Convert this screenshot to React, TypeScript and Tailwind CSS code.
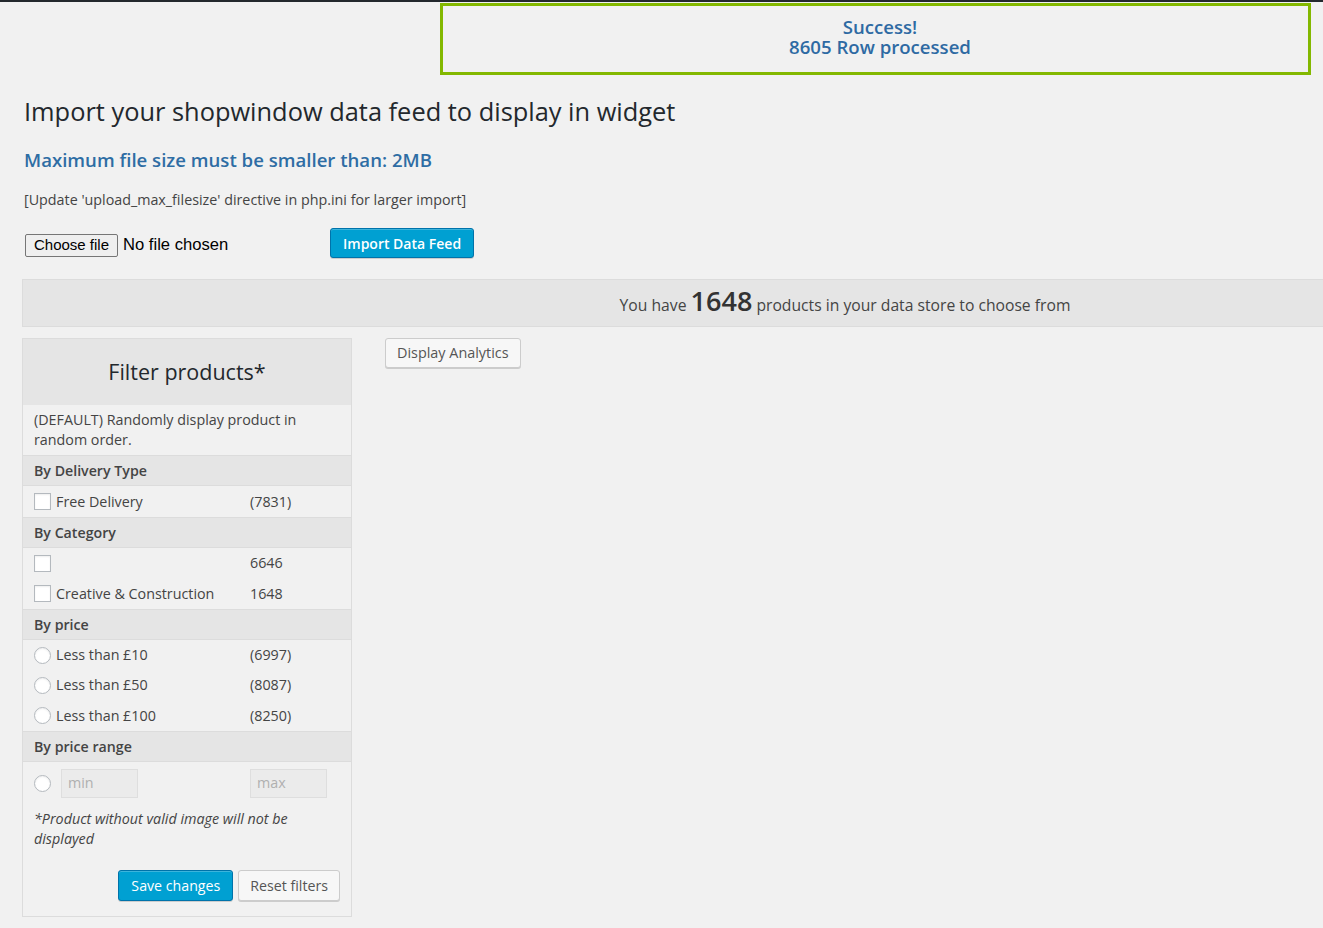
import React from 'react';

const sans = { fontFamily: '"Open Sans", "Noto Sans", sans-serif' };

const Checkbox = () => (
  <span className="inline-block w-[17px] h-[17px] border border-[#b4b9be] bg-white shadow-[inset_0_1px_2px_rgba(0,0,0,0.07)] mr-[5px] shrink-0" />
);

const Radio = () => (
  <span className="inline-block w-[17px] h-[17px] rounded-full border border-[#b4b9be] bg-white shadow-[inset_0_1px_2px_rgba(0,0,0,0.07)] mr-[5px] shrink-0" />
);

const SectionHead: React.FC<{ title: string }> = ({ title }) => (
  <div className="h-[31px] flex items-center px-[11px] bg-[#e5e5e5] border-y border-[#dcdcdc] font-semibold text-[14.2px] text-[#444]">
    {title}
  </div>
);

const Row: React.FC<{ control: React.ReactNode; label: string; count: string; tall?: boolean }> = ({ control, label, count, tall }) => (
  <div className={`${tall ? 'h-[31px]' : 'h-[30px]'} flex items-center px-[11px] text-[14.3px] text-[#444]`}>
    <div className="w-[216px] flex items-center">
      {control}
      <span>{label}</span>
    </div>
    <span>{count}</span>
  </div>
);

export default function App() {
  return (
    <div className="w-[1323px] h-[928px] overflow-hidden bg-[#f1f1f1] text-[#444]" style={sans}>
      {/* admin bar edge */}
      <div className="h-[2px] bg-[#23282d]" />

      {/* Notice */}
      <div className="flex pt-px">
        <div className="ml-[440px] w-[871px] h-[72px] border-[3px] border-[#83b800] flex flex-col items-center justify-center pb-[4px] pl-[9px] text-[18.6px] leading-[20px] text-[#2e6aa3] font-semibold">
          <span>Success!</span>
          <span>8605 Row processed</span>
        </div>
      </div>

      <div className="pl-[24px]">
        <h1 className="mt-[18px] text-[25.4px] leading-[36px] text-[#23282d] font-normal">
          Import your shopwindow data feed to display in widget
        </h1>
        <h3 className="mt-[19px] text-[18.6px] leading-[24px] font-semibold text-[#2e6da4]">
          Maximum file size must be smaller than: 2MB
        </h3>
        <p className="mt-[18px] text-[14.3px] leading-[20px] text-[#444]">
          [Update 'upload_max_filesize' directive in php.ini for larger import]
        </p>

        <div className="mt-[18px] flex items-start h-[30px]">
          <div className="flex items-center w-[306px] mt-[5px]" style={{ fontFamily: '"Liberation Sans", Arial, sans-serif' }}>
            <span className="ml-px h-[23px] px-[8px] flex items-center text-[15px] text-black bg-[#efefef] border border-[#767676] rounded-[2px]">
              Choose file
            </span>
            <span className="ml-[5px] text-[16.6px] text-black">No file chosen</span>
          </div>
          <button className="h-[30px] px-[12px] bg-[#00a0d2] border border-[#0073aa] rounded-[3px] text-white text-[14px] font-semibold shadow-[inset_0_1px_0_rgba(120,200,230,0.5),0_1px_0_rgba(0,0,0,0.15)]">
            Import Data Feed
          </button>
        </div>
      </div>

      {/* Count bar */}
      <div className="mt-[21px] ml-[22px] w-[1646px] h-[48px] bg-[#e5e5e5] border border-[#dcdcdc] flex items-center justify-center pb-[4px]">
        <span className="text-[15.7px] text-[#444]">
          You have <span className="text-[27px] font-semibold text-[#333]">1648</span> products in your data store to choose from
        </span>
      </div>

      <div className="mt-[11px] ml-[22px] flex items-start gap-[33px]">
        {/* Filter panel */}
        <div className="w-[330px] border border-[#dcdcdc] bg-[#f1f1f1]">
          <div className="h-[66px] bg-[#e5e5e5] flex items-center justify-center text-[21.5px] text-[#23282d]">
            Filter products*
          </div>
          <div className="px-[11px] pt-[5px] pb-[5px] text-[14.3px] leading-[20px] text-[#444]">
            (DEFAULT) Randomly display product in random order.
          </div>
          <SectionHead title="By Delivery Type" />
          <Row control={<Checkbox />} label="Free Delivery" count="(7831)" tall />
          <SectionHead title="By Category" />
          <Row control={<Checkbox />} label="" count="6646" />
          <Row control={<Checkbox />} label="Creative & Construction" count="1648" tall />
          <SectionHead title="By price" />
          <Row control={<Radio />} label="Less than £10" count="(6997)" />
          <Row control={<Radio />} label="Less than £50" count="(8087)" />
          <Row control={<Radio />} label="Less than £100" count="(8250)" tall />
          <SectionHead title="By price range" />
          <div className="h-[42px] flex items-center px-[11px] text-[14.3px]">
            <div className="w-[216px] flex items-center">
              <Radio />
              <span className="ml-[5px] w-[77px] h-[29px] bg-[#ebebeb] border border-[#dedede] flex items-center px-[6px] text-[#b0b0b0]">
                min
              </span>
            </div>
            <span className="w-[77px] h-[29px] bg-[#ebebeb] border border-[#dedede] flex items-center px-[6px] text-[#b0b0b0]">
              max
            </span>
          </div>
          <p className="px-[11px] pt-[5px] italic text-[14.3px] leading-[20px] text-[#444]">
            *Product without valid image will not be displayed
          </p>
          <div className="mt-[21px] mb-[15px] flex justify-end gap-[5px] pr-[11px]">
            <button className="h-[31px] px-[12px] bg-[#00a0d2] border border-[#0073aa] rounded-[3px] text-white text-[14.2px] shadow-[inset_0_1px_0_rgba(120,200,230,0.5),0_1px_0_rgba(0,0,0,0.15)]">
              Save changes
            </button>
            <button className="h-[31px] px-[11px] bg-[#f7f7f7] border border-[#cccccc] rounded-[3px] text-[#555] text-[14.2px] shadow-[0_1px_0_#cccccc]">
              Reset filters
            </button>
          </div>
        </div>

        <button className="h-[30px] px-[11px] bg-[#f7f7f7] border border-[#cccccc] rounded-[3px] text-[#555] text-[14.4px] shadow-[0_1px_0_#cccccc]">
          Display Analytics
        </button>
      </div>
    </div>
  );
}
